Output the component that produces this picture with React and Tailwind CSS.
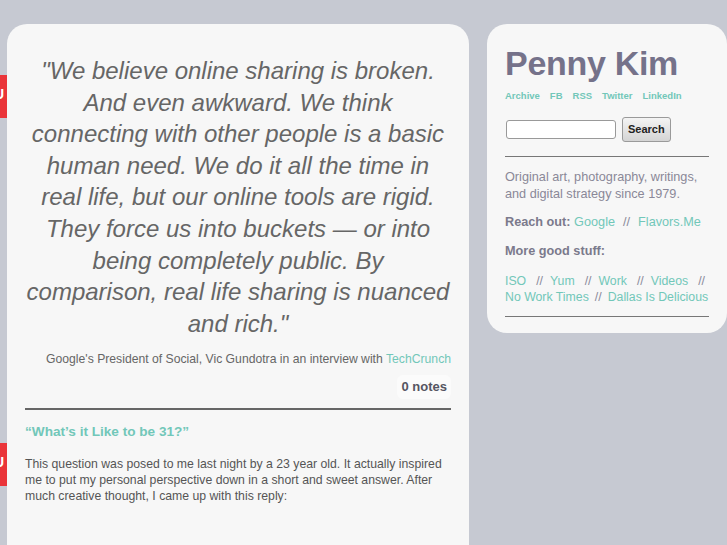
import React from "react";

const teal = "text-[#72c7b9]";

const Sep = ({ className = "mx-[8px]" }) => (
  <span className={`${className} text-[#8a8a9a]`}>//</span>
);

const RedTab = ({ top }) => (
  <div
    className={`absolute left-0 ${top} w-[7px] h-[43px] bg-[#ea3439] overflow-hidden`}
  >
    <span className="absolute left-[-6px] top-[12px] text-[14px] font-bold leading-none text-white">
      U
    </span>
  </div>
);

const App = () => {
  return (
    <div
      className="relative w-[727px] h-[545px] overflow-hidden bg-[#c6c9d2]"
      style={{ fontFamily: '"Liberation Sans", Arial, sans-serif' }}
    >
      <RedTab top="top-[75px]" />
      <RedTab top="top-[443px]" />

      <div className="flex items-start gap-[18px] pt-[24px] pl-[7px]">
        {/* Main column */}
        <div className="w-[462px] min-h-[560px] shrink-0 rounded-[20px] bg-[#f7f7f7] px-[18px] pt-[31px]">
          {/* Quote post */}
          <blockquote className="text-center italic text-[24px] leading-[31.6px] text-[#666666]">
            "We believe online sharing is broken.
            <br />
            And even awkward. We think
            <br />
            connecting with other people is a basic
            <br />
            human need. We do it all the time in
            <br />
            real life, but our online tools are rigid.
            <br />
            They force us into buckets — or into
            <br />
            being completely public. By
            <br />
            comparison, real life sharing is nuanced
            <br />
            and rich."
          </blockquote>
          <p className="mt-[11px] whitespace-nowrap text-right text-[12.2px] leading-[18px] text-[#666666]">
            Google's President of Social, Vic Gundotra in an interview with{" "}
            <a className={teal}>TechCrunch</a>
          </p>
          <div className="mt-[7px] flex justify-end">
            <span className="rounded-[6px] bg-[#fbfbfb] px-[4px] py-[3px] text-[13px] font-bold leading-[18px] text-[#555562]">
              0 notes
            </span>
          </div>
          <div className="mt-[9px] h-[2px] bg-[#666666]" />

          {/* Text post */}
          <h2 className={`mt-[13px] text-[13.6px] font-bold leading-[18px] ${teal}`}>
            “What’s it Like to be 31?”
          </h2>
          <p className="mt-[15px] text-[12.25px] leading-[16px] text-[#555555]">
            This question was posed to me last night by a 23 year old. It actually inspired
            <br />
            me to put my personal perspective down in a short and sweet answer. After
            <br />
            much creative thought, I came up with this reply:
          </p>
        </div>

        {/* Sidebar */}
        <div className="w-[240px] shrink-0 rounded-[20px] bg-[#f7f7f7] px-[18px] pt-[19px] pb-[16px]">
          <h1 className="text-[34px] font-bold leading-[40px] tracking-[-0.3px] text-[#75728a]">
            Penny Kim
          </h1>
          <nav className={`mt-[7px] flex gap-[10px] text-[9.5px] font-bold leading-[12px] ${teal}`}>
            <a>Archive</a>
            <a>FB</a>
            <a>RSS</a>
            <a>Twitter</a>
            <a>LinkedIn</a>
          </nav>
          <div className="mt-[15px] flex items-center gap-[6px]">
            <input
              type="text"
              className="ml-[1px] h-[19px] w-[110px] rounded-[3px] border border-[#999999] bg-white"
            />
            <button
              type="button"
              className="h-[25px] rounded-[3px] border border-[#9a9a9a] bg-gradient-to-b from-[#f4f4f4] to-[#d4d4d4] px-[5px] text-[11px] font-bold text-[#222222]"
            >
              Search
            </button>
          </div>
          <div className="mt-[14px] h-[1px] bg-[#777777]" />

          <p className="mt-[12px] text-[12.7px] leading-[17px] text-[#8a8898]">
            Original art, photography, writings,
            <br />
            and digital strategy since 1979.
          </p>
          <p className="mt-[11px] text-[12.7px] leading-[17px] text-[#8a8898]">
            <span className="font-bold text-[#7b7a8c]">Reach out:</span>{" "}
            <a className={teal}>Google</a>
            <Sep />
            <a className={teal}>Flavors.Me</a>
          </p>
          <p className="mt-[12px] text-[12.7px] font-bold leading-[17px] text-[#7b7a8c]">
            More good stuff:
          </p>
          <div className="mt-[13px] text-[12.3px] leading-[16px] text-[#8a8898]">
            <p className="whitespace-nowrap">
              <a className={teal}>ISO</a>
              <Sep className="ml-[10px] mr-[7px]" />
              <a className={teal}>Yum</a>
              <Sep className="ml-[10px] mr-[7px]" />
              <a className={teal}>Work</a>
              <Sep className="ml-[10px] mr-[7px]" />
              <a className={teal}>Videos</a>
              <Sep className="ml-[10px] mr-[7px]" />
            </p>
            <p className="whitespace-nowrap">
              <a className={teal}>No Work Times</a>
              <Sep className="mx-[6px]" />
              <a className={teal}>Dallas Is Delicious</a>
            </p>
          </div>
          <div className="mt-[11px] h-[1px] bg-[#777777]" />
        </div>
      </div>
    </div>
  );
};

export default App;
